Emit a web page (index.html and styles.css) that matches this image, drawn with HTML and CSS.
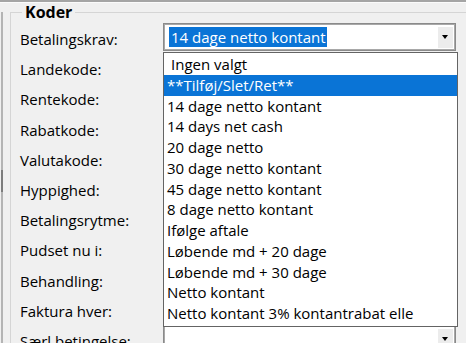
FILE: index.html
```html
<!DOCTYPE html>
<html lang="da">
<head>
  <meta charset="UTF-8" />
  <meta name="viewport" content="width=device-width, initial-scale=1" />
  <title>Koder</title>
  <link rel="stylesheet" href="styles.css">
</head>
<body>
  <div class="top-edge"></div>
  <div class="panel">
    <div class="panel-edge"></div>
    <fieldset class="group">
      <legend>Koder</legend>
      <div class="form-grid">
        <label>Betalingskrav:</label>
        <div class="combo open">
          <span class="combo-text"><span class="sel">14 dage netto kontant</span></span>
          <span class="combo-btn"></span>
          <ul class="drop-list">
            <li class="indent">Ingen valgt</li>
            <li class="active">**Tilføj/Slet/Ret**</li>
            <li>14 dage netto kontant</li>
            <li>14 days net cash</li>
            <li>20 dage netto</li>
            <li>30 dage netto kontant</li>
            <li>45 dage netto kontant</li>
            <li>8 dage netto kontant</li>
            <li>Ifølge aftale</li>
            <li>Løbende md + 20 dage</li>
            <li>Løbende md + 30 dage</li>
            <li>Netto kontant</li>
            <li>Netto kontant 3% kontantrabat elle</li>
          </ul>
        </div>

        <label>Landekode:</label>
        <div class="combo"><span class="combo-text"></span><span class="combo-btn"></span></div>
        <label>Rentekode:</label>
        <div class="combo"><span class="combo-text"></span><span class="combo-btn"></span></div>
        <label>Rabatkode:</label>
        <div class="combo"><span class="combo-text"></span><span class="combo-btn"></span></div>
        <label>Valutakode:</label>
        <div class="combo"><span class="combo-text"></span><span class="combo-btn"></span></div>
        <label>Hyppighed:</label>
        <div class="combo"><span class="combo-text"></span><span class="combo-btn"></span></div>
        <label>Betalingsrytme:</label>
        <div class="combo"><span class="combo-text"></span><span class="combo-btn"></span></div>
        <label>Pudset nu i:</label>
        <div class="combo"><span class="combo-text"></span><span class="combo-btn"></span></div>
        <label>Behandling:</label>
        <div class="combo"><span class="combo-text"></span><span class="combo-btn"></span></div>
        <label>Faktura hver:</label>
        <div class="combo"><span class="combo-text"></span><span class="combo-btn"></span></div>
        <label>Særl betingelse:</label>
        <div class="combo"><span class="combo-text"></span><span class="combo-btn"></span></div>
      </div>
    </fieldset>
  </div>
</body>
</html>
```

FILE: styles.css
```css
html,
body {
  margin: 0;
  height: 343px;
  overflow: hidden;
}

body {
  background-color: #f0f0f0;
  font-family: 'Open Sans', 'Noto Sans', sans-serif;
  font-size: 15px;
  color: #000;
}

.top-edge {
  height: 1px;
  border-top: 2px solid #a5a5a5;
  background-color: #fbfbfb;
}

.panel {
  display: flex;
}

/* splitter edge on the left, with the darker grip */
.panel-edge {
  flex: none;
  width: 2px;
  margin: 9px 0 0 1px;
  background: linear-gradient(to bottom, #b4b4b4 0 158px, #7d7d7d 158px 180px, #b4b4b4 180px);
}

.group {
  flex: none;
  width: 460px;
  margin: 0 0 0 7px;
  padding: 3px 0 0 9px;
  border: 1px solid #d5d5d5;
}

.group legend {
  margin-left: 2px;
  padding: 0 3px;
  font-size: 16px;
  font-weight: bold;
  line-height: 18px;
}

.form-grid {
  display: grid;
  grid-template-columns: 143px 293px;
  grid-auto-rows: 30.2px;
}

.form-grid label {
  align-self: center;
  line-height: 20px;
  white-space: nowrap;
}

/* combo box */
.combo {
  position: relative;
  display: flex;
  box-sizing: border-box;
  height: 28px;
  margin-top: -1px;
  border: 1px solid #8a8a8a;
  box-shadow: inset 0 0 0 1px #a8a8a8;
  background-color: #fff;
  padding: 2px 2px 2px 5px;
}

.combo-text {
  flex: 1;
  display: flex;
  align-items: center;
}

.combo-text .sel {
  background-color: #0a74d6;
  color: #fff;
  line-height: 20px;
  padding: 0 1px 0 2px;
}

.combo-btn {
  flex: none;
  width: 16px;
  background-color: #ececec;
  box-shadow: inset 1px 1px 0 #fff;
  display: flex;
  align-items: center;
  justify-content: center;
}

.combo-btn::after {
  content: '';
  border-left: 3.5px solid transparent;
  border-right: 3.5px solid transparent;
  border-top: 4px solid #000;
}

/* open drop down list */
.drop-list {
  position: absolute;
  top: 28px;
  left: -1px;
  z-index: 2;
  box-sizing: border-box;
  width: 295px;
  margin: 0;
  padding: 1px 0 2px;
  list-style: none;
  background-color: #fff;
  border: 1px solid #646464;
}

.drop-list li {
  height: 20.75px;
  line-height: 20.75px;
  padding-left: 3px;
  white-space: nowrap;
}

.drop-list li.indent {
  padding-left: 7px;
}

.drop-list li.active {
  background-color: #0a74d6;
  color: #fff;
}
```
